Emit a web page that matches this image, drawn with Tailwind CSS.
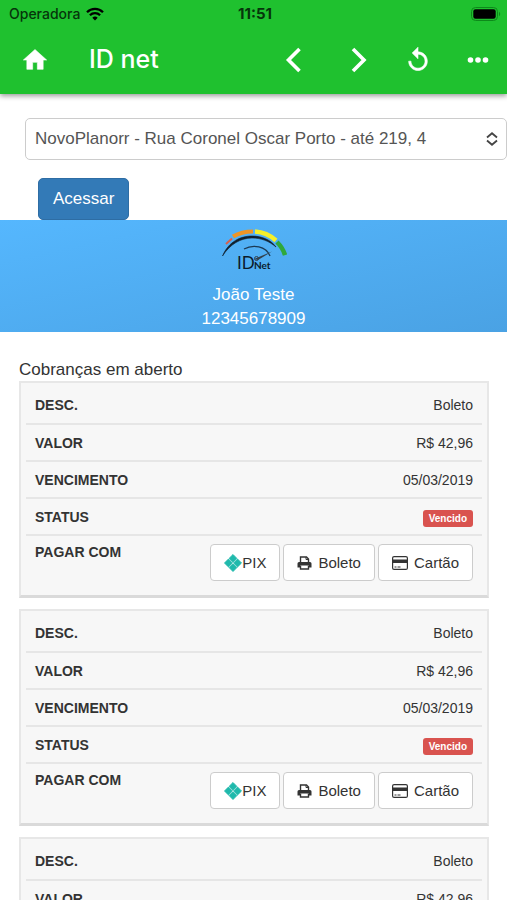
<!DOCTYPE html>
<html lang="pt-BR">
<head>
    <meta charset="UTF-8">
    <meta name="viewport" content="width=device-width, initial-scale=1.0">
    <title>ID net</title>
    <script src="https://cdn.jsdelivr.net/npm/@tailwindcss/browser@4"></script>
</head>
<body class="min-h-screen bg-white font-['Liberation_Sans',Arial,sans-serif] text-[#333]">
    <header class="relative bg-[#1fc12f] shadow-[0_2px_5px_rgba(0,0,0,0.4)] font-[Inter,Roboto,sans-serif]">
        <!-- Status bar -->
        <div class="grid grid-cols-3 items-center h-7 pl-[9px] pr-[6px] text-sm text-[#06350b]">
            <div class="flex items-center gap-[6px]">
                <span class="font-medium">Operadora</span>
                <svg class="w-[18px] h-[14px]" viewBox="0 0 18 14" fill="none" stroke="#000" stroke-width="2.3">
                    <path d="M1 5.2a11.4 11.4 0 0 1 16 0" />
                    <path d="M3.9 8.3a7.2 7.2 0 0 1 10.2 0" />
                    <path d="M9 13.6l-2.7-2.8a3.8 3.8 0 0 1 5.4 0z" fill="#000" stroke="none" />
                </svg>
            </div>
            <span class="text-center text-[15px] font-bold">11:51</span>
            <svg class="w-[31px] h-[14px] justify-self-end" viewBox="0 0 31 14">
                <rect x="1.5" y="0.5" width="26" height="13" rx="4" fill="none" stroke="#0d8a1a" />
                <rect x="3.3" y="2.3" width="22.4" height="9.4" rx="2.2" fill="#000" />
                <path d="M29 4.8v4.4a2.6 2.6 0 0 0 0-4.4z" fill="#0d8a1a" />
            </svg>
        </div>

        <!-- Toolbar -->
        <nav class="flex items-center justify-between h-[66px] pl-[21px] pr-[15px] pb-[2px] text-white">
            <div class="flex items-center gap-10">
                <a href="#" aria-label="Início">
                    <svg class="w-7 h-7" viewBox="0 0 24 24" fill="currentColor"><path d="M10 20v-6h4v6h5v-8h3L12 3 2 12h3v8z" stroke="currentColor" stroke-width="0.5" stroke-linejoin="round" /></svg>
                </a>
                <h1 class="text-[25px] font-medium">ID net</h1>
            </div>
            <div class="flex items-center gap-8">
                <button type="button" aria-label="Voltar">
                    <svg class="w-7 h-7" viewBox="0 0 28 28" fill="none" stroke="currentColor" stroke-width="3.6"><path d="M20.5 3L9.5 14L20.5 25" /></svg>
                </button>
                <button type="button" aria-label="Avançar" class="ml-[5px]">
                    <svg class="w-7 h-7" viewBox="0 0 28 28" fill="none" stroke="currentColor" stroke-width="3.6"><path d="M9 3L20 14L9 25" /></svg>
                </button>
                <button type="button" aria-label="Recarregar">
                    <svg class="w-7 h-7" viewBox="0 0 24 24" fill="currentColor"><path d="M12 5V1L7 6l5 5V7c3.31 0 6 2.69 6 6s-2.69 6-6 6-6-2.69-6-6H4c0 4.42 3.58 8 8 8s8-3.58 8-8-3.58-8-8-8z" stroke="currentColor" stroke-width="0.5" /></svg>
                </button>
                <button type="button" aria-label="Mais opções">
                    <svg class="w-7 h-7" viewBox="0 0 28 28" fill="currentColor"><circle cx="6.5" cy="14" r="2.8" /><circle cx="14" cy="14" r="2.8" /><circle cx="21.5" cy="14" r="2.8" /></svg>
                </button>
            </div>
        </nav>
    </header>

    <main>
        <form class="pt-6 pl-[25px]">
            <div class="relative">
                <select aria-label="Contrato" class="block w-full h-[42px] pl-[9px] pr-8 appearance-none rounded-[5px] border border-[#ccc] bg-white text-[17px] text-[#555]">
                    <option>NovoPlanorr - Rua Coronel Oscar Porto - até 219, 4</option>
                </select>
                <svg class="absolute right-[9px] top-[14px] w-3 h-[14px] pointer-events-none" viewBox="0 0 12 14" fill="none" stroke="#444" stroke-width="1.8"><path d="M1 5.5L6 1.2L11 5.5M1 8.5L6 12.8L11 8.5" /></svg>
            </div>
            <button type="button" class="block mt-[18px] ml-[13px] h-[42px] px-[14px] rounded-[5px] border border-[#2e6da4] bg-[#337ab7] text-[17px] text-white">Acessar</button>
        </form>

        <section class="h-28 pt-2 bg-linear-to-br from-[#55b7fe] to-[#4aa2e4] text-center text-[17px] leading-6 text-white">
            <!-- Logo: gauge over the name -->
            <svg class="mx-auto w-[66px] h-[44px]" viewBox="0 0 66 44" fill="none">
                <path d="M1.5 28C8 13 20 8 31 8C41 8 50 12 55 19C48 13 40 10 31 10C20 10 9 16 1.5 28Z" fill="#10202e" stroke="#10202e" stroke-width="0.6" />
                <path d="M5 16L11 10.5" stroke="#d9604a" stroke-width="2" />
                <path d="M12 8.5C18 5 25 3.5 32 3.5" stroke="#ee9425" stroke-width="4" />
                <path d="M34 3.5C42 4 49 7 55 12.5" stroke="#f5f02a" stroke-width="4.5" />
                <path d="M56 14C60 18 62.5 22 64 27" stroke="#2fa83c" stroke-width="4.5" />
                <path d="M23 21C32 16 45 18 49 28" stroke="#1b3a55" stroke-width="1.3" />
                <path d="M33 31L51 23.5L37 32Z" fill="#33414d" />
                <circle cx="35.5" cy="30.5" r="2" stroke="#33414d" />
                <text x="16" y="41" class="font-[Lato]" font-size="17" fill="#0b1b2b">ID</text>
                <text x="33" y="41" class="font-[Lato]" font-size="10" font-weight="700" fill="#0b1b2b">Net</text>
            </svg>
            <p class="mt-[11px]">João Teste</p>
            <p>12345678909</p>
        </section>

        <section class="pl-[19px] pr-[18px] pt-[27px]">
            <h2 class="text-[17px] leading-[22px]">Cobranças em aberto</h2>
            <div id="cobrancas" class="flex flex-col gap-[11px]"></div>
        </section>
    </main>

    <script>
        const cobrancas = [
            { desc: 'Boleto', valor: 'R$ 42,96', vencimento: '05/03/2019', status: 'Vencido' },
            { desc: 'Boleto', valor: 'R$ 42,96', vencimento: '05/03/2019', status: 'Vencido' },
            { desc: 'Boleto', valor: 'R$ 42,96', vencimento: '05/03/2019', status: 'Vencido' }
        ];

        function linha(titulo, valor) {
            return `
                <tr class="h-[37px] border-b-2 border-[#e6e6e6]">
                    <th scope="row" class="pl-[9px] text-left font-bold">${titulo}</th>
                    <td class="pr-[9px] text-right">${valor}</td>
                </tr>
            `;
        }

        function botao(icone, texto) {
            return `<button type="button" class="flex items-center h-[37px] px-[13px] rounded-[4px] border border-[#ccc] bg-white text-[15px]">${icone}${texto}</button>`;
        }

        const iconePix = `
            <svg class="w-[18px] h-[18px]" viewBox="0 0 18 18" fill="#1fb9ac">
                <path d="M9 0.5L12.9 4.4L9 8.3L5.1 4.4ZM9 17.5L12.9 13.6L9 9.7L5.1 13.6ZM0.5 9L4.4 5.1L8.3 9L4.4 12.9ZM17.5 9L13.6 5.1L9.7 9L13.6 12.9Z" stroke="#1fb9ac" stroke-width="0.9" stroke-linejoin="round" />
            </svg>
        `;
        const iconeBoleto = `
            <svg class="w-[15px] h-[14px] mr-[6px]" viewBox="0 0 15 14" fill="none">
                <path d="M3.5 7V1H9.5L11.5 3V7" stroke="#333" stroke-width="1.4" />
                <path d="M9 1V3.5H11.5" stroke="#333" />
                <path d="M2 6H13Q14.5 6 14.5 7.5V11.5H12V9.5H3V11.5H0.5V7.5Q0.5 6 2 6Z" fill="#333" />
                <path d="M3.5 9.5V13H11.5V9.5" stroke="#333" stroke-width="1.4" />
            </svg>
        `;
        const iconeCartao = `
            <svg class="w-4 h-[14px] mr-[6px]" viewBox="0 0 16 14" fill="none">
                <rect x="0.6" y="0.6" width="14.8" height="12.8" rx="1.5" stroke="#333" stroke-width="1.2" />
                <path d="M0.5 3.5H15.5V7H0.5Z" fill="#333" />
                <path d="M2.5 11H4.5M5.5 11H8.5" stroke="#333" />
            </svg>
        `;

        document.getElementById('cobrancas').innerHTML = cobrancas.map(c => `
            <article class="px-[5px] pt-1 pb-[14px] border-2 border-b-[3px] border-[#e7e7e7] border-b-[#dadada] bg-[#f7f7f7]">
                <table class="w-full border-collapse text-sm">
                    <tbody>
                        ${linha('DESC.', c.desc)}
                        ${linha('VALOR', c.valor)}
                        ${linha('VENCIMENTO', c.vencimento)}
                        ${linha('STATUS', `<span class="inline-block px-[6px] rounded-[3px] bg-[#d9534f] text-[10px] leading-[17px] font-bold text-white">${c.status}</span>`)}
                        <tr>
                            <th scope="row" class="pl-[9px] pt-[6px] text-left align-top font-bold whitespace-nowrap">PAGAR COM</th>
                            <td class="pr-[9px] pt-2">
                                <div class="flex justify-end gap-[3px]">
                                    ${botao(iconePix, 'PIX')}
                                    ${botao(iconeBoleto, 'Boleto')}
                                    ${botao(iconeCartao, 'Cartão')}
                                </div>
                            </td>
                        </tr>
                    </tbody>
                </table>
            </article>
        `).join('');
    </script>
</body>
</html>
